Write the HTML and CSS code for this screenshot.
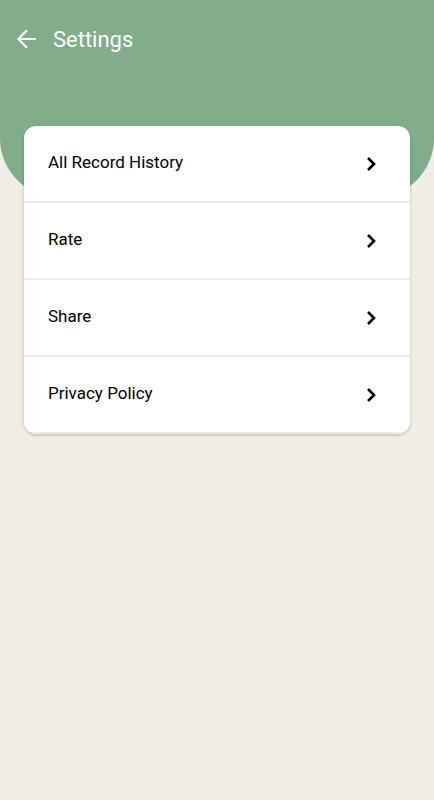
FILE: index.html
```html
<!DOCTYPE html>
<html lang="en">
<head>
  <meta charset="UTF-8">
  <meta name="viewport" content="width=device-width, initial-scale=1.0">
  <title>Settings</title>
  <link rel="stylesheet" href="styles.css">
</head>
<body>
  <header class="header">
    <button type="button" class="back-button" aria-label="Back">
      <svg width="20" height="20" viewBox="0 0 20 20" fill="none" stroke="currentColor" stroke-width="2.2">
        <path d="M19 10H2M10 1.2L1.3 10l8.7 8.8"/>
      </svg>
    </button>
    <h1 class="title">Settings</h1>
  </header>
  <main class="content">
    <nav class="card">
      <a class="row" href="#history">
        <span class="label">All Record History</span>
        <svg class="chevron" viewBox="0 0 10 16"><path d="M2 2l6 6-6 6"/></svg>
      </a>
      <a class="row" href="#rate">
        <span class="label">Rate</span>
        <svg class="chevron" viewBox="0 0 10 16"><path d="M2 2l6 6-6 6"/></svg>
      </a>
      <a class="row" href="#share">
        <span class="label">Share</span>
        <svg class="chevron" viewBox="0 0 10 16"><path d="M2 2l6 6-6 6"/></svg>
      </a>
      <a class="row" href="#privacy">
        <span class="label">Privacy Policy</span>
        <svg class="chevron" viewBox="0 0 10 16"><path d="M2 2l6 6-6 6"/></svg>
      </a>
    </nav>
  </main>
</body>
</html>
```
FILE: styles.css
```css
body {
  background-color: #f2eee7;
  color: #000;
  font-family: Roboto, sans-serif;
  margin: 0;
}

.header {
  display: flex;
  align-items: center;
  gap: 16px;
  height: 198px;
  padding: 0 17px 118px;
  box-sizing: border-box;
  background-color: #81ac8a;
  border-radius: 0 0 60px 60px;
  color: #fff;
}

.back-button {
  display: flex;
  padding: 0 0 2px;
  border: none;
  background: none;
  color: inherit;
  cursor: pointer;
}

.title {
  margin: 0;
  font-size: 22px;
  line-height: 32px;
  font-weight: 400;
}

/* card overlaps the bottom of the header */
.content {
  margin-top: -72px;
  padding: 0 24px 24px;
}

.card {
  background-color: #fff;
  border-radius: 12px;
  overflow: hidden;
  box-shadow: 0 1px 3px rgba(0, 0, 0, 0.25);
}

.row {
  display: flex;
  justify-content: space-between;
  align-items: center;
  height: 77px;
  padding: 0 34px 0 24px;
  box-sizing: border-box;
  border-bottom: 2px solid #ebebeb;
  color: inherit;
  font-size: 17px;
  line-height: 24px;
  text-decoration: none;
}

.label {
  padding-bottom: 4px;
}

.chevron {
  width: 10px;
  height: 16px;
  fill: none;
  stroke: #000;
  stroke-width: 2.6;
}
```
